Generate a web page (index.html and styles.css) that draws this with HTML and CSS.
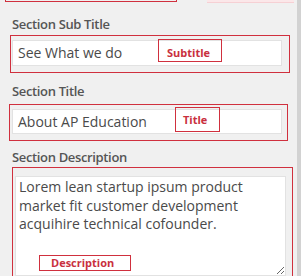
FILE: index.html
```html
<!DOCTYPE html>
<html>
<head>
<meta charset="utf-8">
<link rel="stylesheet" href="styles.css">
</head>
<body>
<div class="panel">
  <div class="top-strip">
    <div class="ann-top"></div>
    <div class="pink"></div>
  </div>

  <div class="label label-1">Section Sub Title</div>
  <div class="ann ann-1">
    <div class="text-input">See What we do</div>
    <span class="badge badge-sub">Subtitle</span>
  </div>

  <div class="label label-2">Section Title</div>
  <div class="ann ann-2">
    <div class="text-input input-2">About AP Education</div>
    <span class="badge badge-title">Title</span>
  </div>

  <div class="label label-3">Section Description</div>
  <div class="ann ann-3">
    <textarea class="text-area" readonly>Lorem lean startup ipsum product market fit customer development acquihire technical cofounder.</textarea>
    <span class="badge badge-desc">Description</span>
  </div>
</div>
</body>
</html>
```

FILE: styles.css
```css
html, body {
  margin: 0;
  padding: 0;
}
body {
  background: #d2d2d2;
  width: 301px;
  height: 276px;
  overflow: hidden;
  font-family: "Open Sans", "Noto Sans", sans-serif;
}
.panel {
  width: 297px;
  height: 276px;
  background: #f0f0f0;
  overflow: hidden;
}
.top-strip {
  display: flex;
  height: 3px;
}
.ann-top {
  margin-left: 5px;
  width: 172px;
  height: 2px;
  box-sizing: border-box;
  border-left: 1px solid #d0303e;
  border-right: 1px solid #d0303e;
  border-bottom: 1px solid #d0303e;
}
.pink {
  margin-left: 30px;
  width: 87px;
  height: 3px;
  box-sizing: border-box;
  background: #fbe7e9;
  border-bottom: 1px solid #f6d0d4;
}
.label {
  margin-left: 12px;
  font-size: 13px;
  line-height: 18px;
  font-weight: 600;
  letter-spacing: -0.35px;
  color: #555;
}
.label-1 { margin-top: 12px; margin-bottom: 2px; }
.label-2 { margin-top: 9px; margin-bottom: 4px; }
.label-3 { margin-top: 7px; margin-bottom: 1px; }

.ann {
  position: relative;
  box-sizing: border-box;
  border: 1px solid #d0303e;
}
.ann-1 {
  margin-left: 10px;
  width: 280px;
  height: 38px;
  padding: 4px 6px 5px 1px;
}
.ann-2 {
  margin-left: 9px;
  width: 279px;
  height: 37px;
  padding: 4px 5px 5px 2px;
}
.ann-3 {
  margin-left: 12px;
  width: 281px;
  height: 120px;
  padding: 8px 6px 0 2px;
}
.text-input {
  box-sizing: border-box;
  width: 270px;
  height: 26px;
  padding: 0 5px;
  border: 1px solid #e2e2e2;
  background: #fff;
  font-size: 14px;
  line-height: 24px;
  color: #4a4a4a;
  white-space: nowrap;
}
.input-2 {
  height: 25px;
  line-height: 23px;
}
.text-area {
  display: block;
  box-sizing: border-box;
  width: 271px;
  height: 100px;
  margin: 0;
  padding: 1px 3px;
  border: 1px solid #e2e2e2;
  background: #fff;
  font-family: "Open Sans", "Noto Sans", sans-serif;
  font-size: 14px;
  line-height: 18.5px;
  color: #4a4a4a;
  outline: none;
  overflow: hidden;
}
.badge {
  position: absolute;
  box-sizing: border-box;
  border: 1px solid #d0303e;
  font-size: 11px;
  line-height: 13px;
  font-weight: 700;
  color: #c9303e;
  white-space: nowrap;
}
.badge-sub {
  left: 147px;
  top: 3px;
  width: 64px;
  height: 23px;
  padding: 6px 0 0 8px;
}
.badge-title {
  left: 165px;
  top: 2px;
  width: 45px;
  height: 25px;
  padding: 5px 0 0 7px;
}
.badge-desc {
  left: 26px;
  top: 87px;
  width: 92px;
  height: 16px;
  padding: 0 0 0 11px;
}
```
